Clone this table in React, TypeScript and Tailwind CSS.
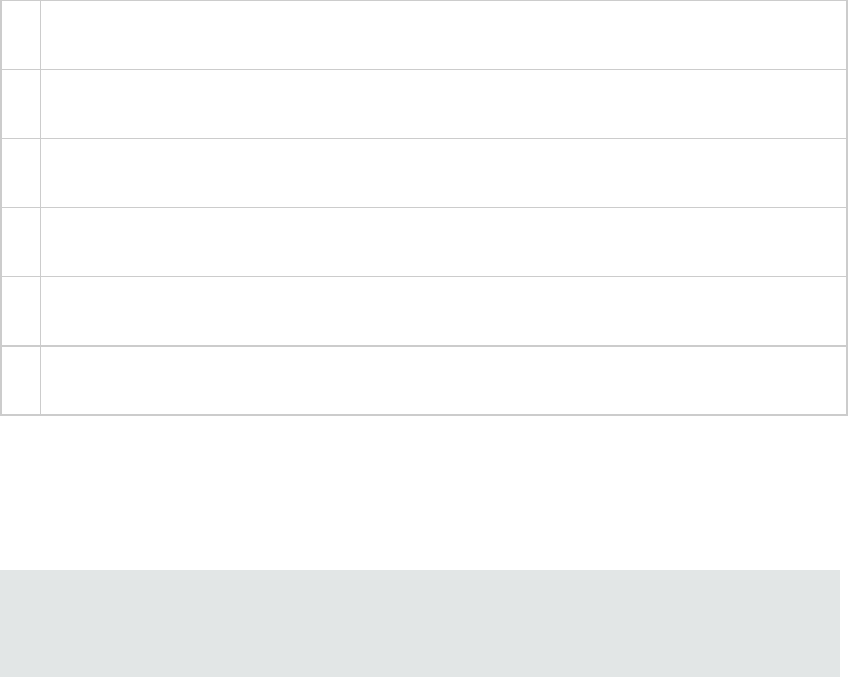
export default function App() {
  const rows = [0, 1, 2, 3, 4, 5]

  return (
    <div className="w-[848px] bg-white font-['Liberation_Sans',sans-serif]">
      {/* Table */}
      <div className="border-t border-l-2 border-r-2 border-b-2 border-[#cccccc]">
        {rows.map((i) => (
          <div
            key={i}
            className={`flex ${
              i < 4 ? "h-[69px] border-b border-[#cccccc]" : ""
            } ${i === 4 ? "h-[70px] border-b-2 border-[#cccccc]" : ""} ${
              i === 5 ? "h-[67px]" : ""
            }`}
          >
            <div className="w-[39px] shrink-0 border-r border-[#cccccc]"></div>
            <div className="flex-1"></div>
          </div>
        ))}
      </div>

      {/* Footer panel */}
      <div className="mt-[154px] h-[107px] w-[840px] bg-[#e2e6e6]"></div>
    </div>
  )
}
